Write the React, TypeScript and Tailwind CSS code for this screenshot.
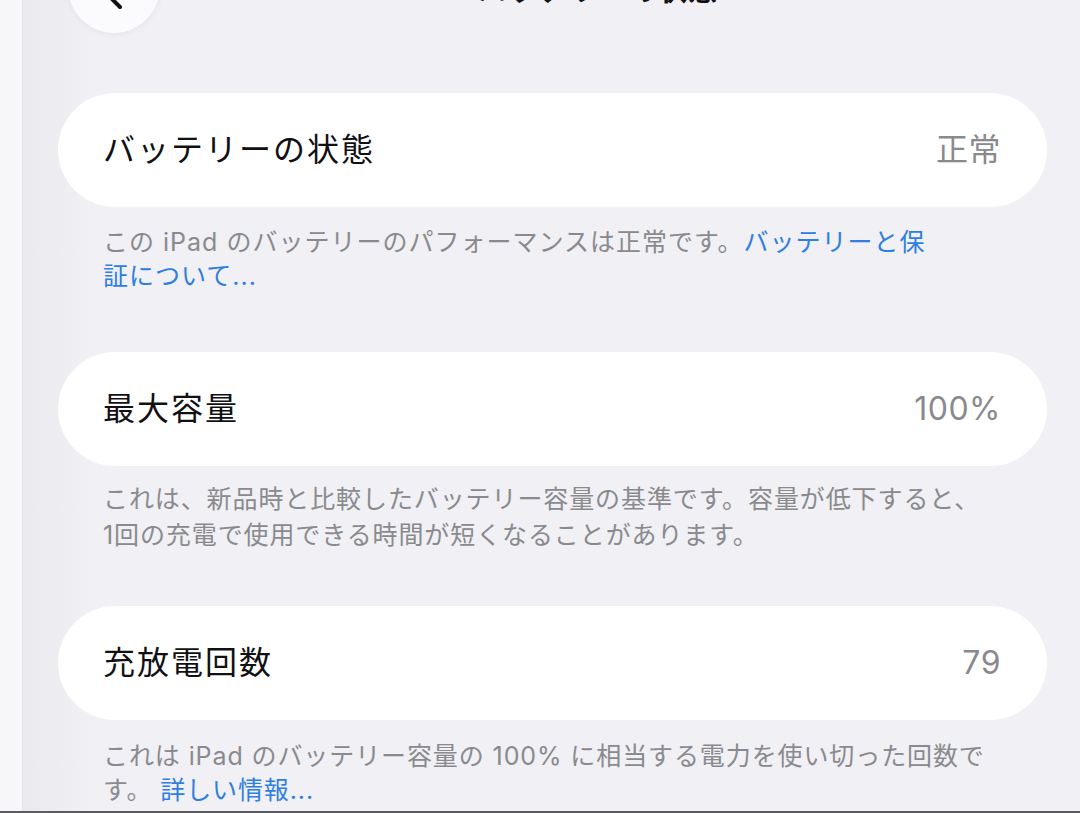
import React from 'react'

const font = { fontFamily: 'Inter, "Noto Sans CJK JP", sans-serif' }

interface RowProps {
  label: string
  value: string
}

function Row({ label, value }: RowProps) {
  return (
    <div className="h-[114px] rounded-full bg-white flex items-center justify-between pl-[45px] pr-[46px]">
      <span className="text-[32px] tracking-[2px] text-[#111114]">{label}</span>
      <span className="text-[32px] tracking-[0.5px] text-[#8a8a8e]">{value}</span>
    </div>
  )
}

export default function App() {
  return (
    <div className="h-[813px] w-[1080px] overflow-hidden flex flex-col bg-[#f0f0f5]" style={font}>
      <div className="flex flex-1 min-h-0">
        {/* サイドバーの端 */}
        <div className="w-[23px] bg-[#f7f7fa] border-r border-[#e4e4e9]" />

        <div className="flex-1 pl-[35px] pr-[33px] bg-[linear-gradient(to_right,#e9e9ee,#f0f0f5_70px)]">
          {/* ナビゲーションバー（上部で切れている） */}
          <div className="relative h-[33px]">
            <div className="absolute left-[10px] top-[-59px] w-[92px] h-[92px] rounded-full bg-[#fbfbfd] shadow-[0_1px_6px_rgba(0,0,0,0.06)]">
              <svg className="absolute left-[30px] top-[34px]" width="30" height="40" viewBox="0 0 30 40" fill="none">
                <path d="M22 4 L8 18 L22 32" stroke="#111" strokeWidth="4" strokeLinecap="round" strokeLinejoin="round" />
              </svg>
            </div>
            <div className="absolute left-[420px] top-[-31px] text-[29px] font-semibold text-[#111114] tracking-[1px] whitespace-nowrap">
              バッテリーの状態
            </div>
          </div>

          <div className="mt-[60px]">
            <Row label="バッテリーの状態" value="正常" />
          </div>
          <div className="mt-[18px] pl-[45px] text-[25px] leading-[34px] tracking-[1px] text-[#8a8a8e]">
            <div className="whitespace-nowrap">
              この iPad のバッテリーのパフォーマンスは正常です。<span className="text-[#2f7ee0]">バッテリーと保</span>
            </div>
            <div className="whitespace-nowrap text-[#2f7ee0]">証について...</div>
          </div>

          <div className="mt-[59px]">
            <Row label="最大容量" value="100%" />
          </div>
          <div className="mt-[15px] pl-[45px] text-[25px] leading-[36px] tracking-[0.9px] text-[#8a8a8e]">
            <div className="whitespace-nowrap">これは、新品時と比較したバッテリー容量の基準です。容量が低下すると、</div>
            <div className="whitespace-nowrap">1回の充電で使用できる時間が短くなることがあります。</div>
          </div>

          <div className="mt-[53px]">
            <Row label="充放電回数" value="79" />
          </div>
          <div className="mt-[19px] pl-[45px] text-[25px] leading-[34px] tracking-[0.9px] text-[#8a8a8e]">
            <div className="whitespace-nowrap">これは iPad のバッテリー容量の 100% に相当する電力を使い切った回数で</div>
            <div className="whitespace-nowrap">
              す。 <span className="text-[#2f7ee0]">詳しい情報...</span>
            </div>
          </div>
        </div>
      </div>
      <div className="h-[2px] bg-[#5c5c60]" />
    </div>
  )
}
